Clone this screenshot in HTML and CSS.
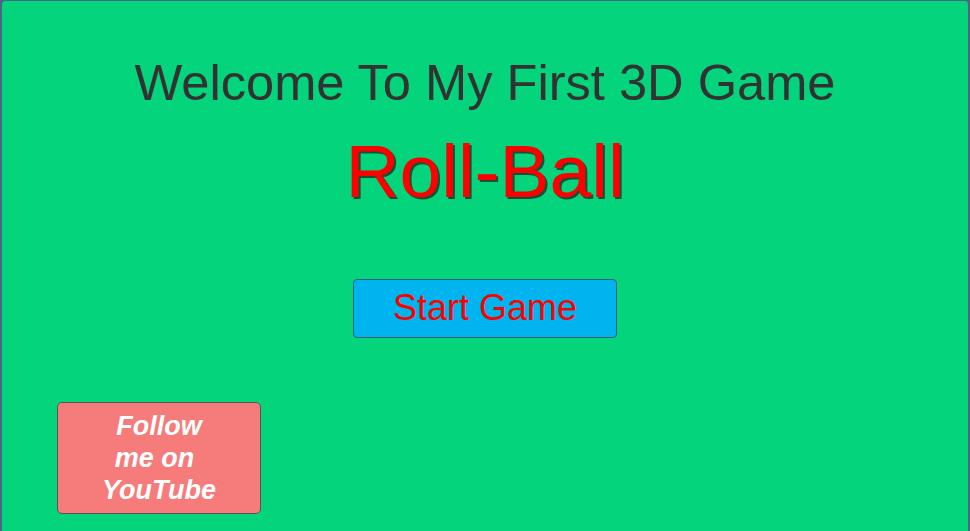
FILE: index.html
```html
<!DOCTYPE html>
<html>
<head>
<meta charset="utf-8">
<link rel="stylesheet" href="styles.css">
</head>
<body>
<div class="screen">
  <h1 class="welcome">Welcome To My First 3D Game</h1>
  <h2 class="title">Roll-Ball</h2>
  <button class="start">Start Game</button>
  <div class="bottom">
    <button class="yt">Follow<br><span class="pad">me on</span><br>YouTube</button>
  </div>
</div>
</body>
</html>
```
FILE: styles.css
```css
html, body {
  margin: 0;
  padding: 0;
  height: 100%;
  background: #4a6585;
  overflow: hidden;
}
.screen {
  box-sizing: border-box;
  height: 531px;
  width: 970px;
  background: #04d47c;
  border-top: 1px solid #4a6585;
  border-left: 2px solid #4a6585;
  border-right: 2px solid #4a6585;
  border-radius: 5px 5px 0 0;
  display: flex;
  flex-direction: column;
  align-items: center;
  font-family: "Liberation Sans", Arial, sans-serif;
}
.welcome {
  margin: 57px 0 0 0;
  font-size: 50.6px;
  line-height: 1;
  font-weight: normal;
  color: #323232;
}
.title {
  margin: 25px 0 0 0;
  font-size: 75px;
  line-height: 1;
  font-weight: normal;
  color: #ff0000;
  text-shadow: 2px 2px 0 rgba(20, 60, 40, 0.85);
}
.start {
  margin-top: 70px;
  box-sizing: border-box;
  width: 264px;
  height: 59px;
  background: #00b4f0;
  border: 1px solid #2a5f78;
  border-radius: 4px;
  color: #ff0000;
  font-family: "Liberation Sans", Arial, sans-serif;
  font-size: 36px;
  line-height: 1;
  padding: 0;
  display: flex;
  align-items: center;
  justify-content: center;
}
.bottom {
  align-self: stretch;
  display: flex;
  margin-top: 64px;
  padding-left: 55px;
}
.yt {
  box-sizing: border-box;
  width: 204px;
  height: 112px;
  background: #f67b7b;
  border: 1px solid #555555;
  border-radius: 5px;
  color: #ffffff;
  font-family: "Liberation Sans", Arial, sans-serif;
  font-size: 27px;
  font-weight: bold;
  font-style: italic;
  line-height: 32px;
  padding: 0;
  text-align: center;
}
.pad {
  padding-right: 9px;
}
```
